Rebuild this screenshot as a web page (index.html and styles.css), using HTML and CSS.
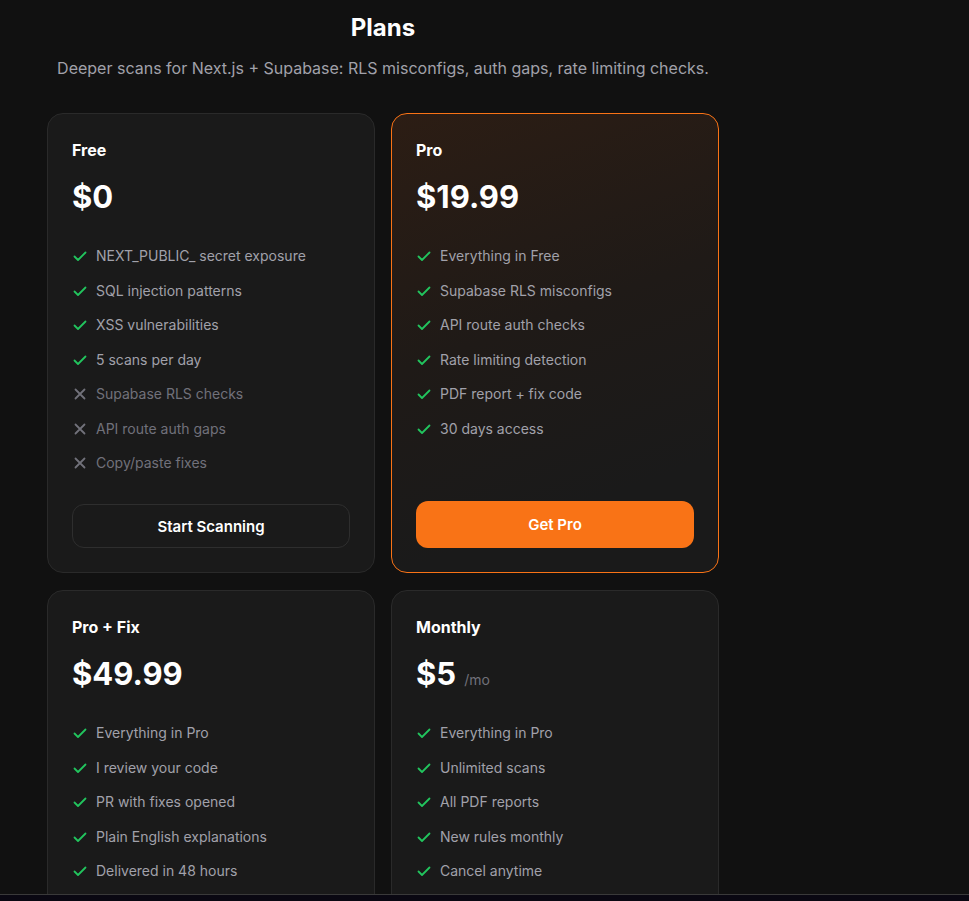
FILE: index.html
```html
<!DOCTYPE html>
<html lang="en">
<head>
<meta charset="utf-8">
<title>Plans</title>
<link rel="stylesheet" href="styles.css">
</head>
<body>
<main class="page">
  <h1 class="title">Plans</h1>
  <p class="subtitle">Deeper scans for Next.js + Supabase: RLS misconfigs, auth gaps, rate limiting checks.</p>
  <div class="grid">
    <section class="card">
      <h2 class="plan">Free</h2>
      <div class="price">$0</div>
      <ul class="features">
        <li class="yes"><svg viewBox="0 0 16 16"><path d="M2.5 8.5l3.5 3.5 7.5-7.5"/></svg>NEXT_PUBLIC_ secret exposure</li>
        <li class="yes"><svg viewBox="0 0 16 16"><path d="M2.5 8.5l3.5 3.5 7.5-7.5"/></svg>SQL injection patterns</li>
        <li class="yes"><svg viewBox="0 0 16 16"><path d="M2.5 8.5l3.5 3.5 7.5-7.5"/></svg>XSS vulnerabilities</li>
        <li class="yes"><svg viewBox="0 0 16 16"><path d="M2.5 8.5l3.5 3.5 7.5-7.5"/></svg>5 scans per day</li>
        <li class="no"><svg viewBox="0 0 16 16"><path d="M3.5 3.5l9 9M12.5 3.5l-9 9"/></svg>Supabase RLS checks</li>
        <li class="no"><svg viewBox="0 0 16 16"><path d="M3.5 3.5l9 9M12.5 3.5l-9 9"/></svg>API route auth gaps</li>
        <li class="no"><svg viewBox="0 0 16 16"><path d="M3.5 3.5l9 9M12.5 3.5l-9 9"/></svg>Copy/paste fixes</li>
      </ul>
      <button class="btn btn-outline">Start Scanning</button>
    </section>
    <section class="card card-pro">
      <h2 class="plan">Pro</h2>
      <div class="price">$19.99</div>
      <ul class="features">
        <li class="yes"><svg viewBox="0 0 16 16"><path d="M2.5 8.5l3.5 3.5 7.5-7.5"/></svg>Everything in Free</li>
        <li class="yes"><svg viewBox="0 0 16 16"><path d="M2.5 8.5l3.5 3.5 7.5-7.5"/></svg>Supabase RLS misconfigs</li>
        <li class="yes"><svg viewBox="0 0 16 16"><path d="M2.5 8.5l3.5 3.5 7.5-7.5"/></svg>API route auth checks</li>
        <li class="yes"><svg viewBox="0 0 16 16"><path d="M2.5 8.5l3.5 3.5 7.5-7.5"/></svg>Rate limiting detection</li>
        <li class="yes"><svg viewBox="0 0 16 16"><path d="M2.5 8.5l3.5 3.5 7.5-7.5"/></svg>PDF report + fix code</li>
        <li class="yes"><svg viewBox="0 0 16 16"><path d="M2.5 8.5l3.5 3.5 7.5-7.5"/></svg>30 days access</li>
      </ul>
      <button class="btn btn-primary">Get Pro</button>
    </section>
    <section class="card">
      <h2 class="plan">Pro + Fix</h2>
      <div class="price">$49.99</div>
      <ul class="features">
        <li class="yes"><svg viewBox="0 0 16 16"><path d="M2.5 8.5l3.5 3.5 7.5-7.5"/></svg>Everything in Pro</li>
        <li class="yes"><svg viewBox="0 0 16 16"><path d="M2.5 8.5l3.5 3.5 7.5-7.5"/></svg>I review your code</li>
        <li class="yes"><svg viewBox="0 0 16 16"><path d="M2.5 8.5l3.5 3.5 7.5-7.5"/></svg>PR with fixes opened</li>
        <li class="yes"><svg viewBox="0 0 16 16"><path d="M2.5 8.5l3.5 3.5 7.5-7.5"/></svg>Plain English explanations</li>
        <li class="yes"><svg viewBox="0 0 16 16"><path d="M2.5 8.5l3.5 3.5 7.5-7.5"/></svg>Delivered in 48 hours</li>
      </ul>
      <button class="btn btn-outline">Get Pro + Fix</button>
    </section>
    <section class="card">
      <h2 class="plan">Monthly</h2>
      <div class="price">$5<span class="per">/mo</span></div>
      <ul class="features">
        <li class="yes"><svg viewBox="0 0 16 16"><path d="M2.5 8.5l3.5 3.5 7.5-7.5"/></svg>Everything in Pro</li>
        <li class="yes"><svg viewBox="0 0 16 16"><path d="M2.5 8.5l3.5 3.5 7.5-7.5"/></svg>Unlimited scans</li>
        <li class="yes"><svg viewBox="0 0 16 16"><path d="M2.5 8.5l3.5 3.5 7.5-7.5"/></svg>All PDF reports</li>
        <li class="yes"><svg viewBox="0 0 16 16"><path d="M2.5 8.5l3.5 3.5 7.5-7.5"/></svg>New rules monthly</li>
        <li class="yes"><svg viewBox="0 0 16 16"><path d="M2.5 8.5l3.5 3.5 7.5-7.5"/></svg>Cancel anytime</li>
      </ul>
      <button class="btn btn-outline">Subscribe</button>
    </section>
  </div>
</main>
<div class="bottombar"></div>
</body>
</html>
```
FILE: styles.css
```css
* { box-sizing: border-box; }
html, body { margin: 0; padding: 0; }
body {
  background: #111111;
  color: #ffffff;
  font-family: Inter, "Noto Sans", "Liberation Sans", sans-serif;
  -webkit-font-smoothing: antialiased;
}
.page {
  width: 672px;
  margin-left: 47px;
  padding-top: 12px;
}
.title {
  margin: 0;
  text-align: center;
  font-size: 24px;
  line-height: 32px;
  font-weight: 700;
}
.subtitle {
  margin: 12px 0 0;
  text-align: center;
  font-size: 16px;
  line-height: 24px;
  color: #a1a1aa;
}
.grid {
  margin-top: 33px;
  display: grid;
  grid-template-columns: 328px 328px;
  column-gap: 16px;
  row-gap: 17px;
}
.card {
  background: #1a1a1a;
  border: 1px solid #2a2a2a;
  border-radius: 16px;
  padding: 24px 24px 24px;
  display: flex;
  flex-direction: column;
  height: 460px;
}
.card-pro {
  border-color: #f97316;
  background: linear-gradient(160deg, #2c1d14 0%, #1f1a17 45%, #1a1a1a 80%);
}
.plan {
  margin: 0;
  font-size: 16px;
  line-height: 24px;
  font-weight: 700;
}
.price {
  margin-top: 15px;
  height: 40px;
  font-size: 31px;
  line-height: 40px;
  font-weight: 700;
  white-space: nowrap;
}
.per {
  margin-left: 8px;
  font-size: 14px;
  line-height: 1;
  font-weight: 400;
  color: #71717a;
}
.features {
  list-style: none;
  margin: 29px 0 0;
  padding: 0;
  display: flex;
  flex-direction: column;
  gap: 14.5px;
}
.features li {
  display: flex;
  align-items: center;
  gap: 8px;
  font-size: 14px;
  line-height: 20px;
  color: #a1a1aa;
}
.features svg {
  width: 16px;
  height: 16px;
  flex: none;
  fill: none;
  stroke-width: 1.8;
  stroke-linecap: round;
  stroke-linejoin: round;
}
.features .yes svg { stroke: #22c55e; }
.features .no { color: #71717a; }
.features .no svg { stroke: #71717a; }
.btn {
  margin-top: auto;
  width: 100%;
  font-family: inherit;
  font-size: 15px;
  font-weight: 600;
  color: #ffffff;
  border-radius: 12px;
  cursor: pointer;
}
.btn-outline {
  height: 44px;
  background: transparent;
  border: 1px solid #2e2e2e;
}
.btn-primary {
  height: 47px;
  background: #f97316;
  border: none;
}
.bottombar {
  position: fixed;
  left: 0;
  right: 0;
  bottom: 0;
  height: 7px;
  background: #0a0812;
  border-top: 1px solid #3a3a3a;
}
```
